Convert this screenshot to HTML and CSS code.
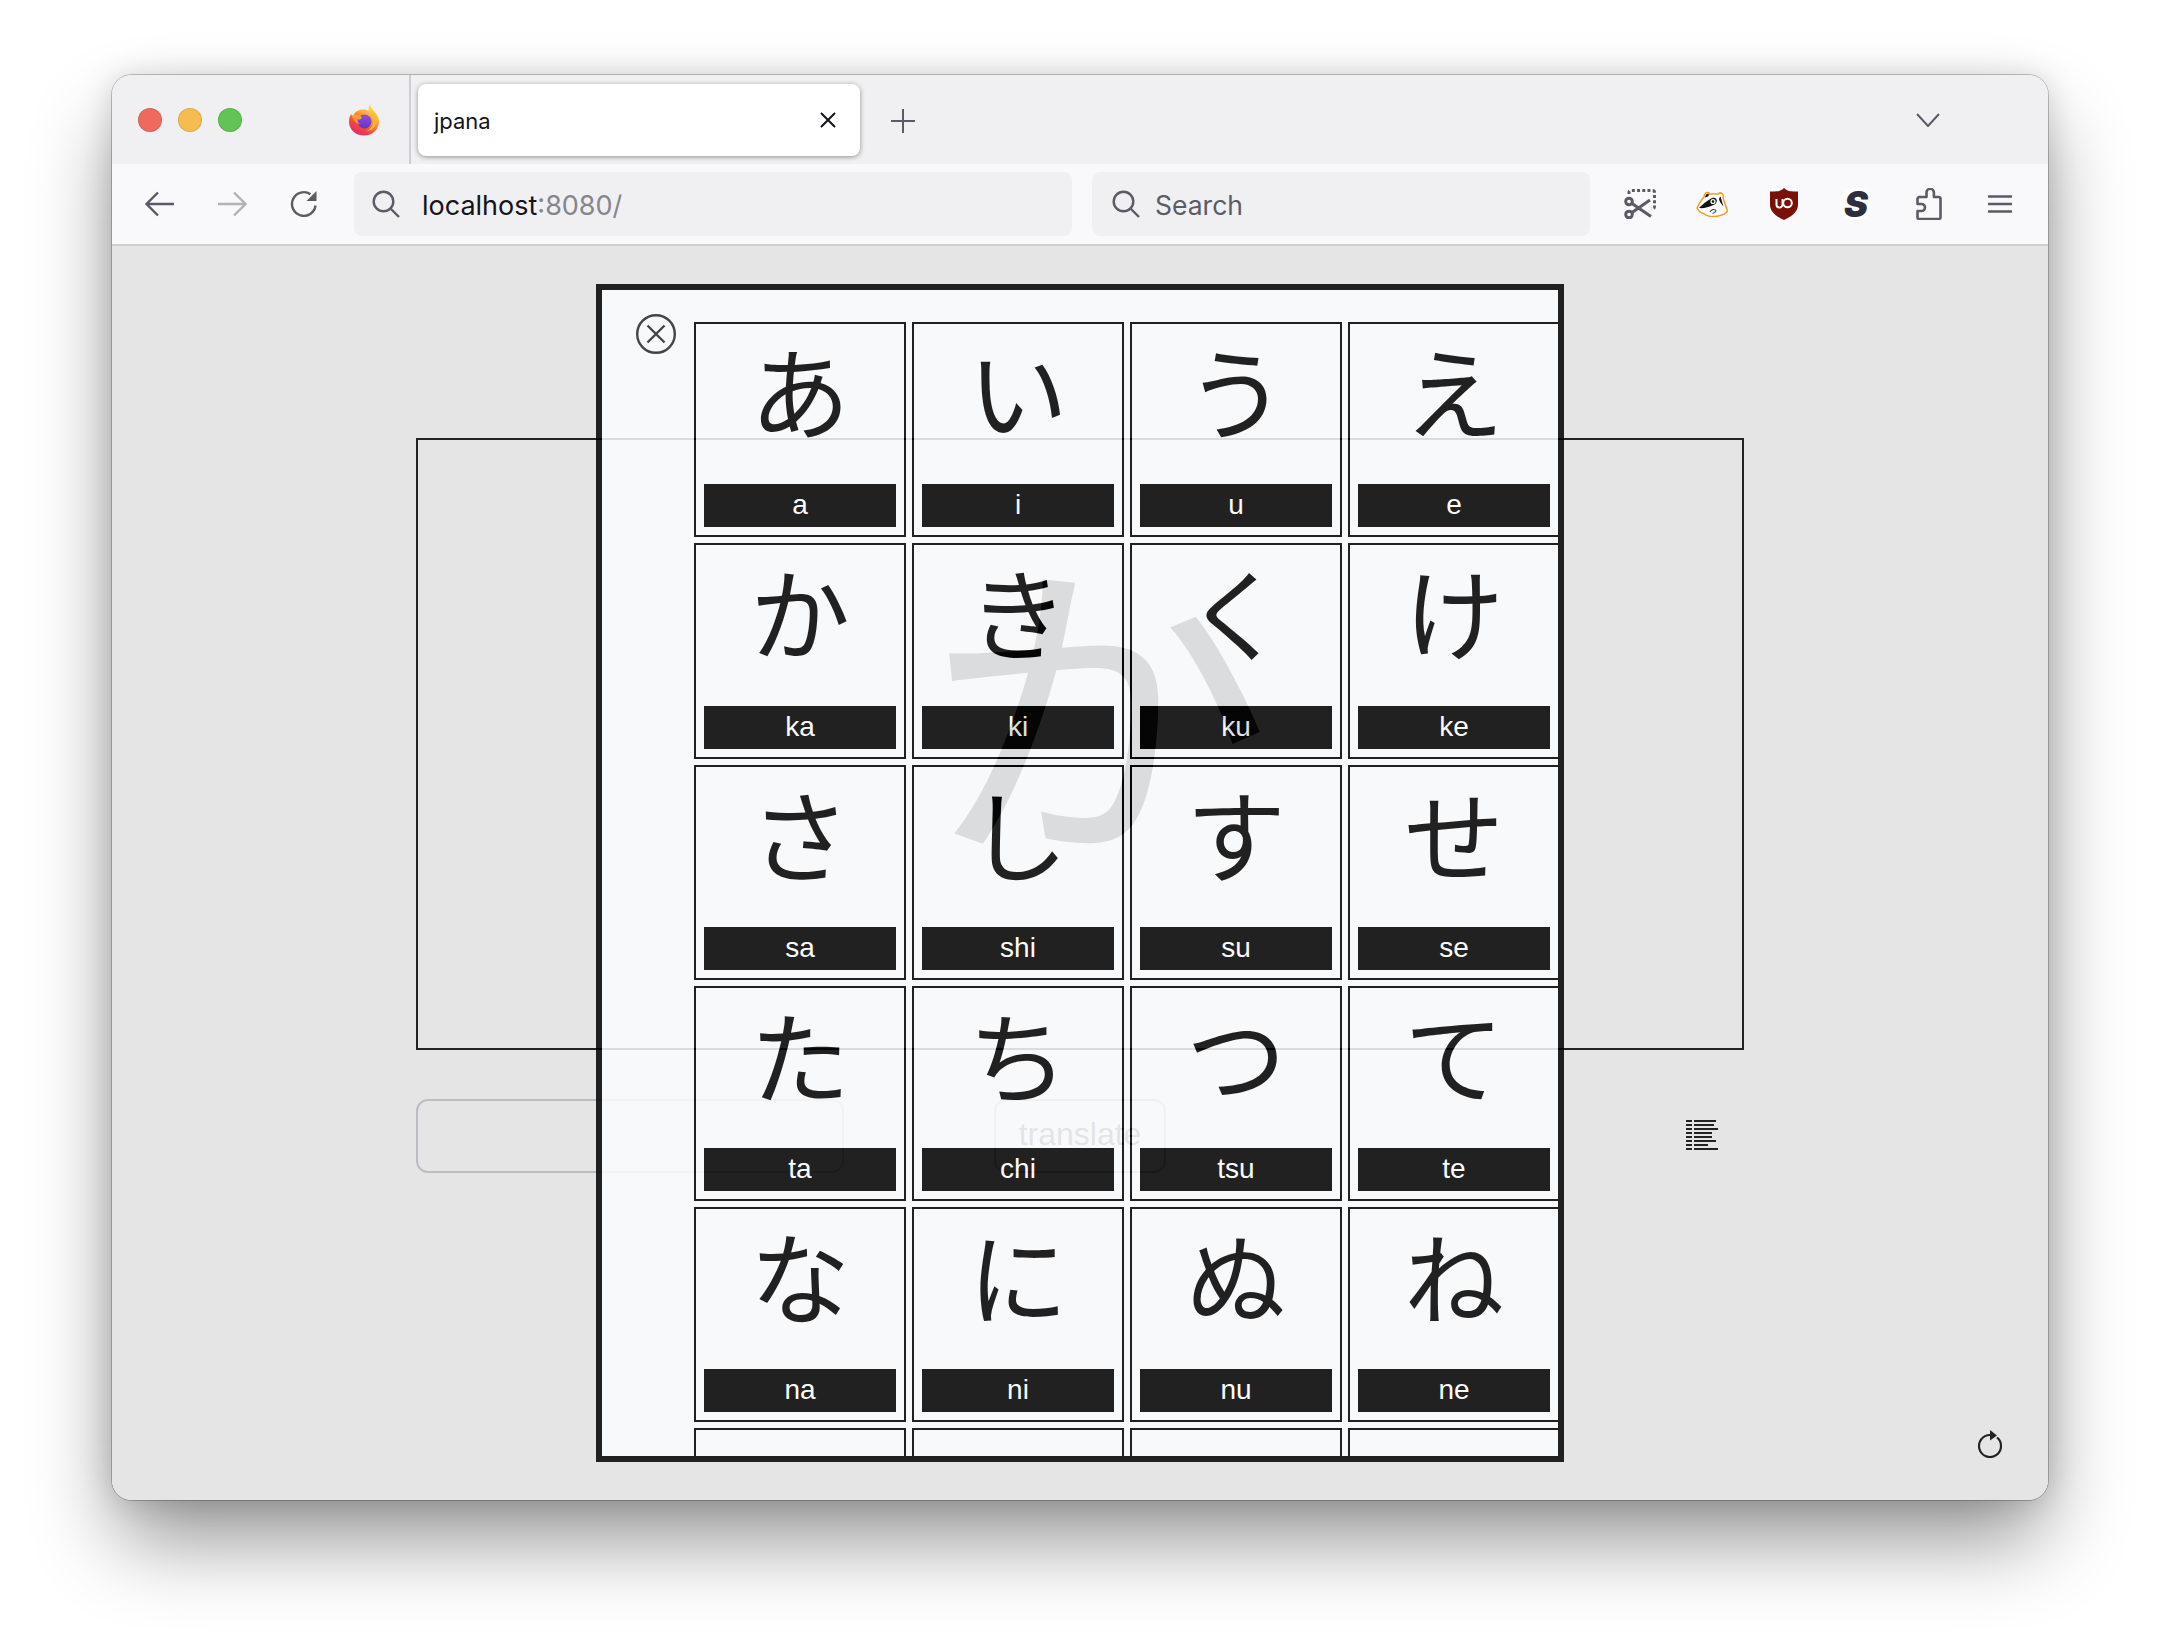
FILE: index.html
```html
<!DOCTYPE html>
<html lang="en">
<head>
<meta charset="utf-8">
<title>jpana</title>
<link rel="stylesheet" href="styles.css">
</head>
<body>
<div class="window">
  <header class="tabstrip">
    <div class="traffic">
      <span class="light light-red"></span>
      <span class="light light-yellow"></span>
      <span class="light light-green"></span>
    </div>
    <svg class="fx-logo" viewBox="0 0 32 32" aria-hidden="true">
      <defs>
        <linearGradient id="fxa" x1="0.8" y1="0.05" x2="0.2" y2="1">
          <stop offset="0" stop-color="#ffe847"/>
          <stop offset="0.35" stop-color="#ffa52e"/>
          <stop offset="0.7" stop-color="#f4483f"/>
          <stop offset="1" stop-color="#e0226f"/>
        </linearGradient>
        <linearGradient id="fxb" x1="0.5" y1="0" x2="0.5" y2="1">
          <stop offset="0" stop-color="#9a45e8"/>
          <stop offset="1" stop-color="#5b3bc4"/>
        </linearGradient>
      </defs>
      <path fill="url(#fxa)" d="M22 0c.6 3 2.2 4.600 4 6.800 3 3.600 5 7 5 10.700C31 25.500 24.500 31.500 16 31.500S1 25.500 1 17.500c0-3 .8-5.600 2.200-7.800.3 1.200.9 2.200 1.700 2.900C6 9 9 6.300 13 5.600c2.500-.4 5.500-.2 7.500 1.400C20.500 4.500 20.800 2 22 0z"/>
      <path fill="#ffb638" d="M25 8c2.400 3 3.500 6 3.300 9.600-.3 5-4 9-9.500 9.800 4-2.500 6.300-6 6.500-10.400.1-3-.2-6-.3-9z"/>
      <circle cx="16.500" cy="17.500" r="7" fill="url(#fxb)"/>
      <path fill="#ff9c2e" d="M3.500 11.500c3-1 6.500-1 9 .5 1.500 1 1.500 2.500 0 3.200-1 .5-2.500.5-3.500 0 .2 2.200 1.600 4 3.500 5-3.500-.5-6.300-2.500-7-5.500-1-.5-1.700-1.700-2-3.200z"/>
      <path fill="#c8a8f5" d="M12 7.500c3-1 7-.6 9 1.500-3-.8-6-.6-9-1.500z"/>
    </svg>
    <div class="tab-divider"></div>
    <div class="tab">
      <span class="tab-title">jpana</span>
      <svg class="tab-close" viewBox="0 0 16 16" aria-hidden="true"><path d="M1 1l14 14M15 1L1 15"/></svg>
    </div>
    <svg class="new-tab" viewBox="0 0 24 24" aria-hidden="true"><path d="M12 0v24M0 12h24"/></svg>
    <svg class="tab-list" viewBox="0 0 24 14" aria-hidden="true"><path d="M1 1l11 12L23 1"/></svg>
  </header>

  <nav class="toolbar">
    <svg class="nav-icon nav-back" viewBox="0 0 30 26" aria-hidden="true"><path d="M29 13H2M13 1.500L1.500 13 13 24.500"/></svg>
    <svg class="nav-icon nav-forward" viewBox="0 0 30 26" aria-hidden="true"><path d="M1 13h27M17 1.500L28.500 13 17 24.500"/></svg>
    <svg class="nav-icon nav-reload" viewBox="0 0 28 28" aria-hidden="true"><path d="M25.500 15.500A11.800 11.800 0 1 1 20.500 4.300"/><path class="fill" d="M26.500 1v10h-10z"/></svg>
    <div class="field field-url">
      <svg class="search-icon" viewBox="0 0 28 28" aria-hidden="true"><circle cx="11.500" cy="11.500" r="9.800"/><path d="M18.500 18.500L27 27"/></svg>
      <span class="url-host">localhost</span><span class="url-rest">:8080/</span>
    </div>
    <div class="field field-search">
      <svg class="search-icon" viewBox="0 0 28 28" aria-hidden="true"><circle cx="11.500" cy="11.500" r="9.800"/><path d="M18.500 18.500L27 27"/></svg>
      <span class="search-label">Search</span>
    </div>
    <div class="extensions">
      <svg class="ext ext-scissors" viewBox="0 0 32 30" aria-hidden="true">
        <path class="dash" d="M5 5V3.500Q5 1.500 7 1.500H28.500Q30.500 1.500 30.500 3.500V17.500Q30.500 19.500 28.500 19.500H27"/>
        <circle cx="5" cy="12.500" r="3.300"/><circle cx="5" cy="25.500" r="3.300"/>
        <path d="M8 14.500L27 27.500M8 23.500L26 11"/>
      </svg>
      <svg class="ext ext-badger" viewBox="0 0 32 26" aria-hidden="true">
        <path fill="#fff" stroke="#f39a1f" stroke-width="1.500" d="M1 17C3 13 5 9 8 6 8.500 2.500 10 1 12 1.500c1 .3 1.500 1 1.800 1.700 2.700-.6 5.500-.6 8 .2C22.800 2 24.500 1.500 26 2.500c1.500 1.200 1.500 3 1 4.500 1.500 4.500 3 9 4.500 13-2 3-7 5-12 5.500-5 .5-9-.5-12-3-2.500-.5-5-2.500-6.500-5.500z"/>
        <path fill="#111" d="M3 17c3-3 8-7.500 13-10 3-.8 4.500.5 4.800 2.500.3 2.200-1.500 4-4 4.800C12 16.500 8 17.500 3 17z"/>
        <path fill="#111" d="M24.500 5.500c1 3 1.500 5 3 10-2-2-4-5-4.500-7.500.3-1 .8-2 1.500-2.500z"/>
        <path fill="#111" d="M9 6.500c.5-3 2-4.500 3.500-3.500.8.800 0 2-.5 2.500z"/>
        <circle cx="17" cy="10.500" r="2.600" fill="#fff"/><circle cx="17" cy="10.500" r="1.300" fill="#111"/>
        <path fill="none" stroke="#555" stroke-width="1.200" d="M14 21c1.500-2.500 4-3 5.500-2 1.200 1-1 3-3 3.500"/>
      </svg>
      <svg class="ext ext-ublock" viewBox="0 0 28 32" aria-hidden="true">
        <path fill="#7a1109" d="M14 0c2 2 4 3 7 3.300 2 .2 4.500.2 7 .2v13c0 6-4 11-14 15.500C4 27.500 0 22.500 0 16.500v-13c2.500 0 5 0 7-.2C10 3 12 2 14 0z"/>
        <path fill="none" stroke="#fff" stroke-width="2" d="M6.500 11v5.500a3 3 0 0 0 6 0V11"/>
        <circle cx="17.500" cy="15" r="4.300" fill="none" stroke="#fff" stroke-width="2"/>
      </svg>
      <span class="ext ext-s">S</span>
      <svg class="ext ext-puzzle" viewBox="0 0 26 32" aria-hidden="true">
        <path d="M10.500 9V4.500a3.700 3.700 0 0 1 7.400 0V9h4.600a2 2 0 0 1 2 2v18.500a1.500 1.500 0 0 1-1.500 1.500H3a1.500 1.500 0 0 1-1.500-1.500V23h4a3.500 3.500 0 0 0 0-7h-4v-5a2 2 0 0 1 2-2z"/>
      </svg>
      <svg class="ext ext-menu" viewBox="0 0 24 18" aria-hidden="true"><path d="M0 1.500h24M0 9h24M0 16.500h24"/></svg>
    </div>
  </nav>

  <main class="content">
    <div class="canvas-box"><span class="ghost-kana" lang="ja">か</span></div>
    <div class="controls">
      <div class="text-input"></div>
      <div class="translate-btn"><span class="translate-label">translate</span></div>
      <svg class="list-icon" viewBox="0 0 32 30" aria-hidden="true">
        <path d="M0 1h6M8 1h22M0 5h6M8 5h20M0 9h6M8 9h24M0 13h6M8 13h18M0 17h6M8 17h18M0 21h6M8 21h22M0 25h6M8 25h14M0 29h6M8 29h24"/>
      </svg>
    </div>
    <svg class="restart-icon" viewBox="0 0 24 28" aria-hidden="true">
      <path d="M12 5A11 11 0 1 0 19 7.500"/><path class="fill" d="M12 0l7 5.500-7 5z"/>
    </svg>

    <section class="modal">
      <svg class="modal-close" viewBox="0 0 40 40" aria-hidden="true"><circle cx="20" cy="20" r="18.800"/><path d="M11.500 11.500l17 17M28.500 11.500l-17 17"/></svg>
      <div class="kana-grid" lang="ja">
        <div class="card"><div class="glyph">あ</div><div class="roma">a</div></div>
        <div class="card"><div class="glyph">い</div><div class="roma">i</div></div>
        <div class="card"><div class="glyph">う</div><div class="roma">u</div></div>
        <div class="card"><div class="glyph">え</div><div class="roma">e</div></div>
        <div class="card"><div class="glyph">か</div><div class="roma">ka</div></div>
        <div class="card"><div class="glyph">き</div><div class="roma">ki</div></div>
        <div class="card"><div class="glyph">く</div><div class="roma">ku</div></div>
        <div class="card"><div class="glyph">け</div><div class="roma">ke</div></div>
        <div class="card"><div class="glyph">さ</div><div class="roma">sa</div></div>
        <div class="card"><div class="glyph">し</div><div class="roma">shi</div></div>
        <div class="card"><div class="glyph">す</div><div class="roma">su</div></div>
        <div class="card"><div class="glyph">せ</div><div class="roma">se</div></div>
        <div class="card"><div class="glyph">た</div><div class="roma">ta</div></div>
        <div class="card"><div class="glyph">ち</div><div class="roma">chi</div></div>
        <div class="card"><div class="glyph">つ</div><div class="roma">tsu</div></div>
        <div class="card"><div class="glyph">て</div><div class="roma">te</div></div>
        <div class="card"><div class="glyph">な</div><div class="roma">na</div></div>
        <div class="card"><div class="glyph">に</div><div class="roma">ni</div></div>
        <div class="card"><div class="glyph">ぬ</div><div class="roma">nu</div></div>
        <div class="card"><div class="glyph">ね</div><div class="roma">ne</div></div>
        <div class="card"></div>
        <div class="card"></div>
        <div class="card"></div>
        <div class="card"></div>
      </div>
    </section>
  </main>
</div>
</body>
</html>
```

FILE: styles.css
```css
* { box-sizing: border-box; }

html, body { margin: 0; padding: 0; }

body {
  width: 2160px;
  height: 1648px;
  overflow: hidden;
  background: #fff;
  padding: 75px 112px 0;
  font-family: Inter, "Liberation Sans", sans-serif;
}

.window {
  width: 1936px;
  height: 1425px;
  display: flex;
  flex-direction: column;
  border-radius: 20px;
  overflow: hidden;
  box-shadow: 0 0 0 1px rgba(0, 0, 0, 0.22), 0 44px 84px -6px rgba(0, 0, 0, 0.44), 0 0 30px rgba(0, 0, 0, 0.14);
}

.tabstrip {
  height: 89px;
  flex: none;
  display: flex;
  align-items: flex-start;
  background: #f0f0f2;
}

.traffic {
  display: flex;
  gap: 16px;
  margin: 33px 0 0 26px;
}

.light {
  width: 24px;
  height: 24px;
  border-radius: 50%;
  border: 1px solid rgba(0, 0, 0, 0.1);
}
.light-red { background: #ee6a5f; }
.light-yellow { background: #f5bd4f; }
.light-green { background: #61c454; }

.fx-logo {
  width: 32px;
  height: 32px;
  margin: 29px 0 0 106px;
  flex: none;
}

.tab-divider {
  width: 2px;
  height: 89px;
  background: #cfcfd3;
  margin-left: 29px;
  flex: none;
}

.tab {
  width: 442px;
  height: 72px;
  margin: 9px 0 0 7px;
  background: #fff;
  border-radius: 8px;
  box-shadow: 0 1px 5px rgba(0, 0, 0, 0.4);
  display: flex;
  align-items: center;
  justify-content: space-between;
  padding: 2px 24px 0 16px;
  flex: none;
}

.tab-title {
  font-size: 22px;
  color: #15141a;
}

.tab-close {
  width: 16px;
  height: 16px;
  fill: none;
  stroke: #15141a;
  stroke-width: 2;
  margin-bottom: 2px;
}

.new-tab {
  width: 24px;
  height: 24px;
  margin: 34px 0 0 31px;
  fill: none;
  stroke: #5b5b66;
  stroke-width: 2;
  flex: none;
}

.tab-list {
  width: 24px;
  height: 14px;
  margin: 38px 0 0 1001px;
  fill: none;
  stroke: #5b5b66;
  stroke-width: 2;
  flex: none;
}

.toolbar {
  height: 82px;
  flex: none;
  background: #f9f9fb;
  border-bottom: 2px solid #cfcfd3;
  display: flex;
  align-items: center;
}

.nav-icon {
  fill: none;
  stroke: #5b5b66;
  stroke-width: 2.4;
  flex: none;
}
.nav-icon .fill { fill: #5b5b66; stroke: none; }

.nav-back { width: 30px; height: 26px; margin-left: 33px; }
.nav-forward { width: 30px; height: 26px; margin-left: 42px; opacity: 0.45; }
.nav-reload { width: 28px; height: 28px; margin-left: 43px; }

.field {
  height: 64px;
  background: #f0f0f2;
  border-radius: 8px;
  display: flex;
  align-items: center;
  flex: none;
}

.field-url {
  width: 718px;
  margin-left: 36px;
  padding-left: 18px;
  font-size: 27px;
}

.field-search {
  width: 498px;
  margin-left: 20px;
  padding-left: 20px;
  font-size: 26.500px;
}

.search-icon {
  width: 28px;
  height: 28px;
  fill: none;
  stroke: #5b5b66;
  stroke-width: 2.4;
  flex: none;
  margin-right: 22px;
}
.field-search .search-icon { margin-right: 15px; }

.url-host, .url-rest, .search-label { padding-top: 2px; }
.url-host { color: #15141a; }
.url-rest { color: #85858c; }
.search-label { color: #5b5b66; }

.extensions {
  display: flex;
  align-items: center;
  flex: none;
  width: 420px;
  height: 40px;
}

.ext { flex: none; }

.ext-scissors {
  width: 32px;
  height: 30px;
  margin-left: 34px;
  fill: none;
  stroke: #5b5b66;
  stroke-width: 3;
}
.ext-scissors .dash { stroke-dasharray: 3 2.200; }

.ext-badger { width: 32px; height: 26px; margin-left: 40px; }
.ext-ublock { width: 28px; height: 32px; margin-left: 42px; }

.ext-s {
  width: 32px;
  height: 32px;
  margin-left: 42px;
  border-radius: 50%;
  background: #fff;
  color: #2f2e3f;
  font: italic 900 36px/32px Inter, "Liberation Sans", sans-serif;
  text-align: center;
}

.ext-puzzle {
  width: 26px;
  height: 32px;
  margin-left: 44px;
  fill: none;
  stroke: #5b5b66;
  stroke-width: 2.6;
  stroke-linejoin: round;
}

.ext-menu {
  width: 24px;
  height: 18px;
  margin-left: 46px;
  fill: none;
  stroke: #5b5b66;
  stroke-width: 2.6;
}

.content {
  flex: 1;
  position: relative;
  background: #e5e5e5;
  display: flex;
  flex-direction: column;
  padding: 192px 304px 42px;
  min-height: 0;
}

.canvas-box {
  height: 612px;
  flex: none;
  border: 2px solid #222;
  display: flex;
  align-items: center;
  justify-content: center;
}

.ghost-kana {
  font-family: "Noto Sans CJK JP", sans-serif;
  font-size: 350px;
  line-height: 1;
  color: #222;
  transform: translate(17px, -50px) scaleY(0.92);
}

.controls {
  display: flex;
  align-items: center;
  margin-top: 49px;
  flex: none;
}

.text-input {
  width: 428px;
  height: 74px;
  border: 2px solid #bcbdc2;
  border-radius: 12px;
  flex: none;
}

.translate-btn {
  width: 172px;
  height: 74px;
  margin-left: 150px;
  border: 2px solid #a8a9ae;
  border-radius: 12px;
  font-family: "Liberation Sans", sans-serif;
  font-size: 32px;
  color: #555;
  display: flex;
  align-items: center;
  justify-content: center;
  padding-bottom: 4px;
  flex: none;
}

.list-icon {
  width: 32px;
  height: 30px;
  margin: 0 26px 3px auto;
  fill: none;
  stroke: #222;
  stroke-width: 2;
  flex: none;
}

.restart-icon {
  width: 24px;
  height: 28px;
  margin-top: auto;
  align-self: flex-end;
  margin-right: -258px;
  fill: none;
  stroke: #222;
  stroke-width: 2.200;
  flex: none;
}
.restart-icon .fill { fill: #222; stroke: none; }

.modal {
  position: absolute;
  left: 484px;
  top: 38px;
  width: 968px;
  height: 1178px;
  border: 6px solid #000;
  background: #fcfdff;
  opacity: 0.85;
  padding: 32px 0 0 92px;
  overflow: hidden;
}

.modal-close {
  position: absolute;
  left: 34px;
  top: 24px;
  width: 40px;
  height: 40px;
  fill: none;
  stroke: #2a2a2a;
  stroke-width: 2.400;
}

.kana-grid {
  display: grid;
  grid-template-columns: repeat(4, 212px);
  grid-auto-rows: 215.250px;
  gap: 6px;
  width: 866px;
}

.card {
  border: 2px solid #000;
  padding: 0 8px 8px;
  display: flex;
  flex-direction: column;
}

.glyph {
  flex: 1;
  display: flex;
  align-items: center;
  justify-content: center;
  font-family: "Noto Sans CJK JP", sans-serif;
  font-size: 100px;
  line-height: 1;
  color: #000;
  padding-bottom: 30px;
}

.roma {
  height: 43px;
  flex: none;
  background: #000;
  color: #fff;
  font-family: "Liberation Sans", sans-serif;
  font-size: 28px;
  line-height: 41px;
  text-align: center;
}
```
